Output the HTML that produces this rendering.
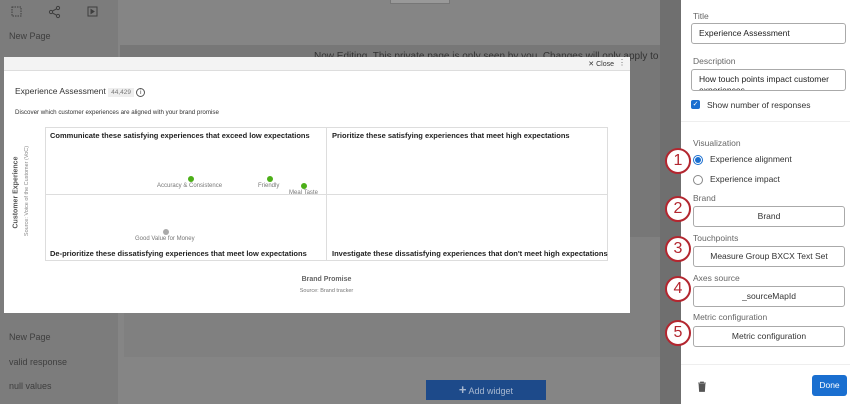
<!DOCTYPE html>
<html><head><style>
*{box-sizing:border-box;margin:0;padding:0}
body{width:850px;height:404px;overflow:hidden;position:relative;font-family:"Liberation Sans",sans-serif;background:#868686}
.abs{position:absolute}
.side{left:0;top:0;width:118px;height:404px;background:#7c7c7c}
.side .it{position:absolute;left:9px;font-size:9px;color:#3e3e3e}
.main{left:118px;top:0;width:563px;height:404px;background:#858585}
.modal{left:4px;top:57px;width:626px;height:256px;background:#fff}
.mh{left:0;top:0;width:626px;height:14px;background:#f3f3f3;border-bottom:1px solid #ddd}
.q{position:absolute;font-size:7.5px;font-weight:bold;color:#222}
.dot{position:absolute;width:6px;height:6px;border-radius:50%;background:#4caf18}
.lbl{position:absolute;font-size:6px;color:#777}
.panel{left:681px;top:0;width:169px;height:404px;background:#fff}
.lab{position:absolute;left:12px;font-size:8.5px;color:#666}
.box{position:absolute;left:12px;width:152px;height:21px;border:1px solid #aaa;border-radius:3px;font-size:8.5px;color:#333;text-align:center;line-height:19px}
.circ{position:absolute;left:665px;width:26px;height:26px;border:2px solid #b3262f;border-radius:50%;background:#fff;color:#b3262f;font-size:16px;text-align:center;line-height:22px}
.rad{position:absolute;left:12px;width:10px;height:10px;border-radius:50%;border:1px solid #888}
</style></head><body>
<div class="abs side">
<svg class="abs" style="left:0;top:0" width="110" height="24" fill="none" stroke="#3e3e3e" stroke-width="1">
<rect x="12" y="7" width="9" height="9" stroke-dasharray="1.5 1"/>
<circle cx="51" cy="12" r="1.6"/><circle cx="58" cy="8" r="1.6"/><circle cx="58" cy="16" r="1.6"/><path d="M52.5 11 L56.5 8.8 M52.5 13 L56.5 15.2"/>
<rect x="88" y="7" width="9" height="9"/><path d="M91 9.5 L94 11.5 L91 13.5Z" fill="#3e3e3e"/>
</svg>
<div class="it" style="top:31px">New Page</div>
<div class="it" style="top:332px">New Page</div>
<div class="it" style="top:357px">valid response</div>
<div class="it" style="top:381px">null values</div>
</div>
<div class="abs main">
<div class="abs" style="left:272px;top:0;width:60px;height:4px;background:#999;border:1px solid #777;border-top:none"></div>
<div class="abs" style="left:2px;top:45px;width:561px;height:192px;background:#777"></div>
<div class="abs" style="left:196px;top:51px;font-size:10px;color:#333">Now Editing. This private page is only seen by you. Changes will only apply to you.</div>
<div class="abs" style="left:6px;top:237px;width:557px;height:120px;background:#808080"></div>
<div class="abs" style="left:308px;top:380px;width:120px;height:20px;background:#1d4a8a;color:#a8b8d0;font-size:9px;line-height:20px;text-align:center"><b style="font-size:13px">+</b> Add widget</div>
</div>
<div class="abs modal">
<div class="abs mh"><span class="abs" style="right:16px;top:3px;font-size:7px;color:#333">✕ Close</span><span class="abs" style="right:4px;top:1px;font-size:8px;color:#666">⋮</span></div>
<div class="abs" style="left:11px;top:29px;font-size:8.5px;color:#333">Experience Assessment <span style="background:#eee;color:#777;font-size:6.5px;padding:1px 3px">44,429</span> <span style="border:1px solid #555;border-radius:50%;display:inline-block;width:9px;height:9px;line-height:8px;text-align:center;font-size:6px">i</span></div>
<div class="abs" style="left:11px;top:52px;font-size:6.2px;color:#333">Discover which customer experiences are aligned with your brand promise</div>
<div class="abs" style="left:41px;top:70px;width:563px;height:134px;border:1px solid #ddd"></div>
<div class="abs" style="left:41px;top:137px;width:563px;height:1px;background:#ddd"></div>
<div class="abs" style="left:322px;top:70px;width:1px;height:134px;background:#ddd"></div>
<div class="q" style="left:46px;top:74px">Communicate these satisfying experiences that exceed low expectations</div>
<div class="q" style="left:328px;top:74px">Prioritize these satisfying experiences that meet high expectations</div>
<div class="q" style="left:46px;top:192px">De-prioritize these dissatisfying experiences that meet low expectations</div>
<div class="q" style="left:328px;top:192px">Investigate these dissatisfying experiences that don't meet high expectations</div>
<div class="dot" style="left:184px;top:119px"></div><div class="lbl" style="left:153px;top:126px">Accuracy &amp; Consistence</div>
<div class="dot" style="left:263px;top:119px"></div><div class="lbl" style="left:254px;top:126px">Friendly</div>
<div class="dot" style="left:297px;top:126px"></div><div class="lbl" style="left:285px;top:133px">Meal Taste</div>
<div class="dot" style="left:159px;top:172px;background:#aaa"></div><div class="lbl" style="left:131px;top:179px">Good Value for Money</div>
<div class="abs" style="left:-33px;top:132px;width:90px;transform:rotate(-90deg);font-size:7px;font-weight:bold;color:#555;text-align:center">Customer Experience</div>
<div class="abs" style="left:-32px;top:131px;width:110px;transform:rotate(-90deg);font-size:5.5px;color:#888;text-align:center">Source: Voice of the Customer (VoC)</div>
<div class="abs" style="left:260px;top:219px;width:125px;text-align:center;font-size:7px;font-weight:bold;color:#666">Brand Promise</div>
<div class="abs" style="left:260px;top:231px;width:125px;text-align:center;font-size:5.5px;color:#777">Source: Brand tracker</div>
</div>
<div class="abs" style="left:660px;top:0;width:21px;height:404px;background:#6f6f6f"></div>
<div class="abs panel">
<div class="lab" style="top:11px">Title</div>
<div class="box" style="top:23px;left:10px;width:155px;text-align:left;padding-left:7px;color:#222">Experience Assessment</div>
<div class="lab" style="top:56px">Description</div>
<div class="box" style="top:69px;left:10px;width:155px;text-align:left;padding-left:7px;color:#222;height:22px;line-height:11px;overflow:hidden;padding-top:4px">How touch points impact customer experiences</div>
<div class="abs" style="left:10px;top:100px;width:9px;height:9px;background:#1a6fd0;border-radius:2px;color:#fff;font-size:7px;line-height:9px;text-align:center">✓</div>
<div class="abs" style="left:26px;top:100px;font-size:8.5px;color:#333">Show number of responses</div>
<div class="abs" style="left:0;top:121px;width:169px;height:1px;background:#eee"></div>
<div class="lab" style="top:138px">Visualization</div>
<div class="rad" style="top:155px;border-color:#1a6fd0"><div style="width:6px;height:6px;margin:1px;border-radius:50%;background:#1a6fd0"></div></div>
<div class="abs" style="left:29px;top:154px;font-size:8.5px;color:#333">Experience alignment</div>
<div class="rad" style="top:175px"></div>
<div class="abs" style="left:29px;top:174px;font-size:8.5px;color:#333">Experience impact</div>
<div class="lab" style="top:193px">Brand</div>
<div class="box" style="top:206px">Brand</div>
<div class="lab" style="top:233px">Touchpoints</div>
<div class="box" style="top:246px">Measure Group BXCX Text Set</div>
<div class="lab" style="top:273px">Axes source</div>
<div class="box" style="top:286px">_sourceMapId</div>
<div class="lab" style="top:312px">Metric configuration</div>
<div class="box" style="top:326px">Metric configuration</div>
<div class="abs" style="left:0;top:364px;width:169px;height:1px;background:#eee"></div>
<svg class="abs" style="left:16px;top:381px" width="10" height="11"><path d="M1 2h8M3.5 2V1h3v1M2 3h6l-.5 7.5h-5z" fill="#555" stroke="#555" stroke-width=".8"/></svg>
<div class="abs" style="left:131px;top:375px;width:35px;height:21px;background:#1a6fd0;border-radius:3px;color:#fff;font-size:8.5px;line-height:21px;text-align:center">Done</div>
</div>
<div class="circ" style="top:148px">1</div>
<div class="circ" style="top:196px">2</div>
<div class="circ" style="top:236px">3</div>
<div class="circ" style="top:276px">4</div>
<div class="circ" style="top:320px">5</div>
</body></html>
